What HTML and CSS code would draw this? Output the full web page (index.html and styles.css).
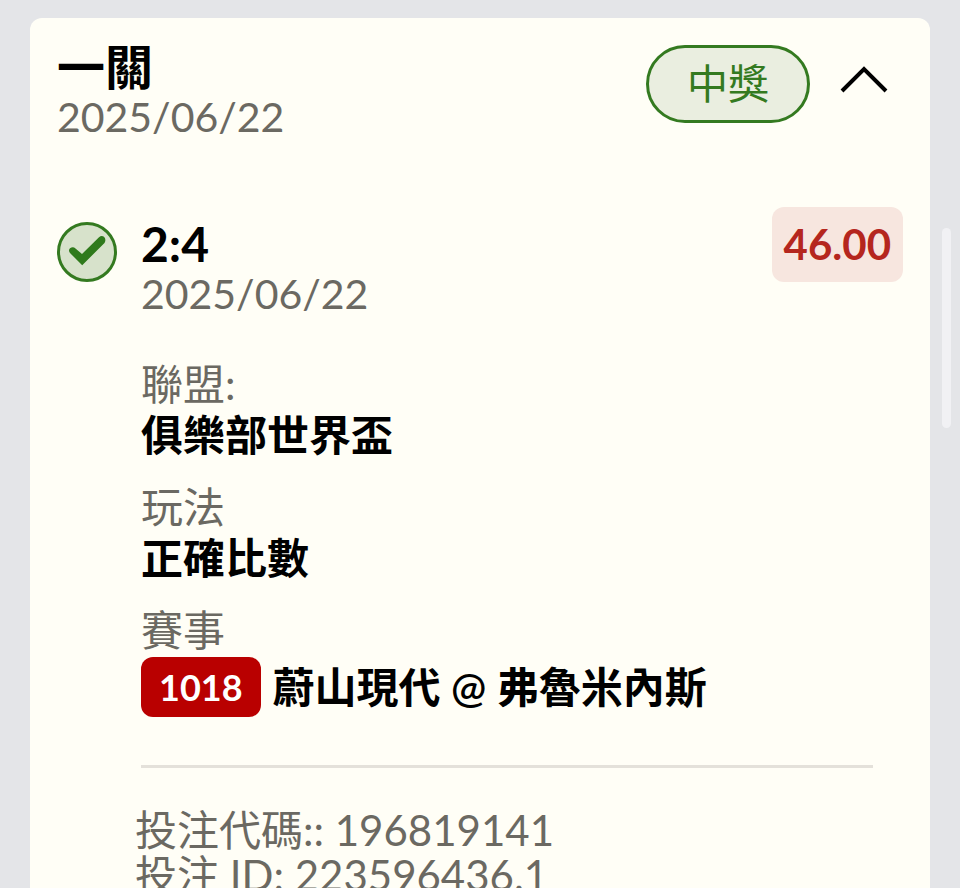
FILE: index.html
```
<!DOCTYPE html>
<html lang="zh-Hant">
<head>
    <meta charset="UTF-8">
    <meta name="viewport" content="width=device-width, initial-scale=1.0">
    <title>投注記錄</title>
    <link rel="stylesheet" href="styles.css">
</head>
<body>
    <main class="ticket">
        <header class="ticket-header">
            <div class="ticket-info">
                <h1>一關</h1>
                <p class="date">2025/06/22</p>
            </div>
            <span class="status">中獎</span>
            <button class="toggle" type="button" aria-label="收合">
                <svg width="48" height="30" viewBox="0 0 48 30">
                    <path d="M2 26 L24 4 L46 26" fill="none" stroke="#000" stroke-width="4"/>
                </svg>
            </button>
        </header>

        <section class="leg">
            <svg class="check" width="60" height="60" viewBox="0 0 60 60">
                <circle cx="30" cy="30" r="28.5" fill="#d7e2cb" stroke="#347a20" stroke-width="3"/>
                <path d="M13 31 Q11 28.5 13 26.3 Q16 24.3 18.5 26.5 L25 32 L42 15.3 Q44.5 12.8 47 14.8 Q49.5 17.5 47.5 21 L25.2 43.2 Z" fill="#2f7a1c"/>
            </svg>
            <div class="leg-body">
                <div class="leg-top">
                    <div class="leg-title">
                        <h2>2:4</h2>
                        <p class="date">2025/06/22</p>
                    </div>
                    <span class="odds">46.00</span>
                </div>
                <dl class="details">
                    <div class="detail">
                        <dt>聯盟:</dt>
                        <dd>俱樂部世界盃</dd>
                    </div>
                    <div class="detail">
                        <dt>玩法</dt>
                        <dd>正確比數</dd>
                    </div>
                    <div class="detail">
                        <dt>賽事</dt>
                        <dd class="match"><span class="tag">1018</span>蔚山現代 @ 弗魯米內斯</dd>
                    </div>
                </dl>
            </div>
        </section>

        <footer class="bet-info">
            <p>投注代碼:: 196819141</p>
            <p>投注 ID: 223596436.1</p>
        </footer>
    </main>
    <div class="scroll-thumb"></div>
</body>
</html>
```
FILE: styles.css
```
* {
    margin: 0;
    padding: 0;
    box-sizing: border-box;
}

body {
    height: 100vh;
    overflow: hidden;
    padding: 18px 30px;
    background-color: #e4e5e8;
    font-family: Lato, "Noto Sans CJK TC", sans-serif;
    font-size: 42px;
    color: #000;
}

.ticket {
    padding: 24px 27px;
    border-radius: 12px;
    background-color: #fffef6;
}

.ticket-header {
    display: flex;
    align-items: flex-start;
}

.ticket-info {
    flex: 1;
}

h1,
h2 {
    font-size: 48px;
    line-height: 50px;
}

.date {
    font-size: 41px;
    line-height: 50px;
    color: #6b6962;
}

.status {
    margin-top: 3px;
    padding: 0 38px;
    border: 3px solid #347a20;
    border-radius: 39px;
    background-color: #eaeee0;
    color: #347a20;
    font-size: 41px;
    line-height: 72px;
}

.toggle {
    display: flex;
    margin: 23px 15px 0 30px;
    border: none;
    background: none;
    cursor: pointer;
}

/* Pronóstico */
.leg {
    display: flex;
    gap: 24px;
    margin-top: 65px;
}

.check {
    flex: none;
    margin-top: 15px;
}

.leg-body {
    flex: 1;
}

.leg-top {
    display: flex;
    justify-content: space-between;
    align-items: flex-start;
}

.leg-title {
    padding-top: 12px;
}

.odds {
    padding: 0 12px;
    border-radius: 12px;
    background-color: #f7e6df;
    color: #b5261e;
    font-weight: bold;
    line-height: 75px;
}

.details {
    margin: 40px 30px 0 0;
    padding-bottom: 48px;
    border-bottom: 3px solid #e4e1da;
}

.detail {
    margin-top: 21px;
    line-height: 51px;
}

.detail dt {
    color: #6b6962;
}

.detail dd {
    font-weight: 600;
}

.detail .match {
    display: flex;
    align-items: center;
    gap: 12px;
    margin-top: 1px;
}

.tag {
    padding: 0 18px;
    border-radius: 12px;
    background-color: #b90000;
    color: #fff;
    font-size: 36px;
    font-weight: bold;
    line-height: 60px;
}

.bet-info {
    margin-top: 40px;
    padding-left: 78px;
    line-height: 45px;
    color: #6b6962;
}

/* Barra de desplazamiento */
.scroll-thumb {
    position: fixed;
    top: 228px;
    right: 9px;
    width: 9px;
    height: 200px;
    border-radius: 5px;
    background-color: #f1f1f4;
}
```
